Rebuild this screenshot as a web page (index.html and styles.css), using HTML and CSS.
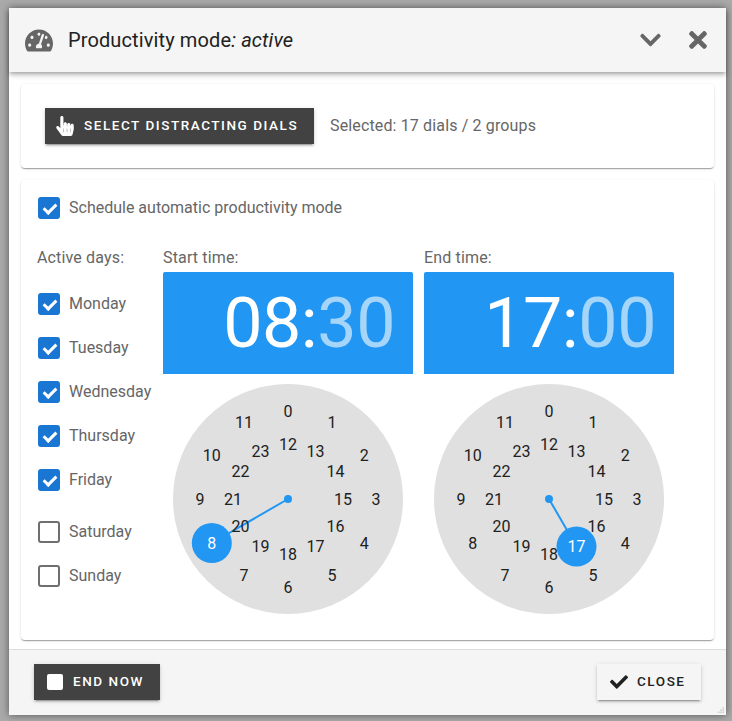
FILE: index.html
```html
<!DOCTYPE html>
<html lang="en">
<head>
  <meta charset="UTF-8">
  <title>Productivity mode</title>
  <link rel="stylesheet" href="styles.css">
</head>
<body>
  <div class="dialog">

    <div class="header">
      <svg class="icon-gauge" viewBox="0 0 576 512"><path d="M288 32C128.94 32 0 160.94 0 320c0 52.8 14.25 102.26 39.06 144.8 5.61 9.62 16.3 15.2 27.44 15.2h443c11.14 0 21.83-5.58 27.44-15.2C561.75 422.26 576 372.8 576 320c0-159.06-128.94-288-288-288zm0 64c14.71 0 26.58 10.13 30.32 23.65-1.11 2.26-2.64 4.23-3.45 6.67l-9.22 27.67c-5.13 3.49-10.97 6.01-17.64 6.01-17.67 0-32-14.33-32-32S270.33 96 288 96zM96 384c-17.67 0-32-14.33-32-32s14.33-32 32-32 32 14.33 32 32-14.33 32-32 32zm48-160c-17.67 0-32-14.33-32-32s14.33-32 32-32 32 14.33 32 32-14.33 32-32 32zm246.77-72.41l-61.33 184C343.13 347.33 352 364.54 352 384c0 11.72-3.38 22.55-8.88 32H232.88c-5.5-9.45-8.88-20.28-8.88-32 0-33.94 26.5-61.43 59.9-63.59l61.34-184.01c4.17-12.56 17.73-19.45 30.36-15.17 12.57 4.19 19.35 17.79 15.17 30.36zm14.66 57.2l15.52-46.55c3.47-1.29 7.13-2.23 11.05-2.23 17.67 0 32 14.33 32 32s-14.33 32-32 32c-11.38-.01-20.89-6.28-26.57-15.22zM480 384c-17.67 0-32-14.33-32-32s14.33-32 32-32 32 14.33 32 32-14.33 32-32 32z"/></svg>
      <div class="title">Productivity mode<em>: active</em></div>
      <svg class="icon-chevron" viewBox="0 0 448 512"><path d="M207.029 381.476L12.686 187.132c-9.373-9.373-9.373-24.569 0-33.941l22.667-22.667c9.357-9.357 24.522-9.375 33.901-.04L224 284.505l154.745-154.021c9.379-9.335 24.544-9.317 33.901.04l22.667 22.667c9.373 9.373 9.373 24.569 0 33.941L240.971 381.476c-9.373 9.372-24.569 9.372-33.942 0z"/></svg>
      <svg class="icon-times" viewBox="0 0 352 512"><path d="M242.72 256l100.07-100.07c12.28-12.28 12.28-32.19 0-44.48l-22.24-22.24c-12.28-12.28-32.19-12.28-44.48 0L176 189.28 75.93 89.21c-12.28-12.28-32.19-12.28-44.48 0L9.21 111.45c-12.28 12.28-12.28 32.19 0 44.48L109.28 256 9.21 356.07c-12.28 12.28-12.28 32.19 0 44.48l22.24 22.24c12.28 12.28 32.2 12.28 44.48 0L176 322.72l100.07 100.07c12.28 12.28 32.2 12.28 44.48 0l22.24-22.24c12.28-12.28 12.28-32.19 0-44.48L242.72 256z"/></svg>
    </div>

    <div class="content">
      <div class="card card-select">
        <button class="btn btn-dark btn-select">
          <svg class="icon-hand" viewBox="0 0 448 512"><path d="M448 240v96c0 3.084-.356 6.159-1.063 9.162l-32 136C410.686 499.23 394.562 512 376 512H168a40.004 40.004 0 0 1-32.35-16.473l-127.997-176c-12.993-17.866-9.043-42.883 8.822-55.876 17.867-12.994 42.884-9.043 55.877 8.823L104 315.992V40c0-22.091 17.908-40 40-40s40 17.909 40 40v200h8v-40c0-22.091 17.908-40 40-40s40 17.909 40 40v40h8v-24c0-22.091 17.908-40 40-40s40 17.909 40 40v24h8c0-22.091 17.908-40 40-40s40 17.909 40 40zm-256 80h-8v96h8v-96zm88 0h-8v96h8v-96zm88 0h-8v96h8v-96z"/></svg>
          Select distracting dials
        </button>
        <span class="selected">Selected: 17 dials / 2 groups</span>
      </div>

      <div class="card card-schedule">
        <div class="check"><span class="box on"></span>Schedule automatic productivity mode</div>

        <div class="schedule">
          <div class="days">
            <div class="label">Active days:</div>
            <div class="day-list">
              <div class="check"><span class="box on"></span>Monday</div>
              <div class="check"><span class="box on"></span>Tuesday</div>
              <div class="check"><span class="box on"></span>Wednesday</div>
              <div class="check"><span class="box on"></span>Thursday</div>
              <div class="check"><span class="box on"></span>Friday</div>
              <div class="check weekend"><span class="box"></span>Saturday</div>
              <div class="check"><span class="box"></span>Sunday</div>
            </div>
          </div>

          <div class="time-col">
            <div class="label">Start time:</div>
            <div class="time">08:<span class="minutes">30</span></div>
            <svg class="clock" viewBox="-115 -115 230 230">
              <circle class="face" r="115"/>
              <line class="hand" x1="0" y1="0" x2="-76.2" y2="44"/>
              <circle class="hand-dot" r="4"/>
              <circle class="hand-dot" cx="-76.2" cy="44" r="20"/>
              <text x="0" y="-88">0</text><text x="44" y="-76.2">1</text><text x="76.2" y="-44">2</text><text x="88" y="0">3</text>
              <text x="76.2" y="44">4</text><text x="44" y="76.2">5</text><text x="0" y="88">6</text><text x="-44" y="76.2">7</text>
              <text class="picked" x="-76.2" y="44">8</text><text x="-88" y="0">9</text><text x="-76.2" y="-44">10</text><text x="-44" y="-76.2">11</text>
              <text x="0" y="-55">12</text><text x="27.5" y="-47.6">13</text><text x="47.6" y="-27.5">14</text><text x="55" y="0">15</text>
              <text x="47.6" y="27.5">16</text><text x="27.5" y="47.6">17</text><text x="0" y="55">18</text><text x="-27.5" y="47.6">19</text>
              <text x="-47.6" y="27.5">20</text><text x="-55" y="0">21</text><text x="-47.6" y="-27.5">22</text><text x="-27.5" y="-47.6">23</text>
            </svg>
          </div>

          <div class="time-col">
            <div class="label">End time:</div>
            <div class="time">17:<span class="minutes">00</span></div>
            <svg class="clock" viewBox="-115 -115 230 230">
              <circle class="face" r="115"/>
              <line class="hand" x1="0" y1="0" x2="27.5" y2="47.6"/>
              <circle class="hand-dot" r="4"/>
              <text x="0" y="-88">0</text><text x="44" y="-76.2">1</text><text x="76.2" y="-44">2</text><text x="88" y="0">3</text>
              <text x="76.2" y="44">4</text><text x="44" y="76.2">5</text><text x="0" y="88">6</text><text x="-44" y="76.2">7</text>
              <text x="-76.2" y="44">8</text><text x="-88" y="0">9</text><text x="-76.2" y="-44">10</text><text x="-44" y="-76.2">11</text>
              <text x="0" y="-55">12</text><text x="27.5" y="-47.6">13</text><text x="47.6" y="-27.5">14</text><text x="55" y="0">15</text>
              <text x="47.6" y="27.5">16</text><text x="0" y="55">18</text><text x="-27.5" y="47.6">19</text>
              <text x="-47.6" y="27.5">20</text><text x="-55" y="0">21</text><text x="-47.6" y="-27.5">22</text><text x="-27.5" y="-47.6">23</text>
              <circle class="hand-dot" cx="27.5" cy="47.6" r="20"/>
              <text class="picked" x="27.5" y="47.6">17</text>
            </svg>
          </div>
        </div>
      </div>
    </div>

    <div class="footer">
      <button class="btn btn-dark btn-end"><span class="stop"></span>End now</button>
      <button class="btn btn-light">
        <svg class="icon-check" viewBox="0 0 512 512"><path d="M173.898 439.404l-166.4-166.4c-9.997-9.997-9.997-26.206 0-36.204l36.203-36.204c9.997-9.998 26.207-9.998 36.204 0L192 312.69 432.095 72.596c9.997-9.997 26.207-9.997 36.204 0l36.203 36.204c9.997 9.997 9.997 26.206 0 36.204l-294.4 294.401c-9.998 9.997-26.207 9.997-36.204-.001z"/></svg>
        Close
      </button>
      <!-- resize handle -->
      <svg class="grip" viewBox="0 0 8 8"><path d="M6 0h2v2H6zM3 3h2v2H3zM6 3h2v2H6zM0 6h2v2H0zM3 6h2v2H3zM6 6h2v2H6z"/></svg>
    </div>

  </div>
</body>
</html>
```

FILE: styles.css
```css
html, body {
  margin: 0;
  padding: 0;
  height: 100%;
  background: #aaaaaa;
  overflow: hidden;
  font-family: Roboto, sans-serif;
}
body {
  padding: 8px 0 0 9px;
  box-sizing: border-box;
}
.dialog {
  width: 717px;
  height: 707px;
  display: flex;
  flex-direction: column;
  background: white;
  box-shadow: 0 0 8px rgba(0, 0, 0, .5);
}

.header {
  height: 64px;
  flex: none;
  display: flex;
  align-items: center;
  padding: 0 19px 0 16px;
  background: #f5f5f5;
  position: relative;
  box-shadow: 0 2px 4px -1px rgba(0, 0, 0, .3), 0 4px 5px 0 rgba(0, 0, 0, .14);
}
.icon-gauge {
  width: 28px;
  height: 25px;
  fill: #666;
}
.title {
  flex: 1;
  margin-left: 15px;
  font-size: 20px;
  letter-spacing: .12px;
  color: #212121;
}
.icon-chevron {
  width: 21px;
  height: 24px;
  fill: #666;
  margin-right: 28px;
}
.icon-times {
  width: 18px;
  height: 26px;
  fill: #666;
}

.content {
  flex: 1;
  padding: 12px 12px 9px;
}
.card {
  background: white;
  border-radius: 4px;
  box-shadow: 0 2px 1px -1px rgba(0, 0, 0, .2), 0 1px 1px 0 rgba(0, 0, 0, .14), 0 1px 3px 0 rgba(0, 0, 0, .12);
}
.card-select {
  height: 84px;
  display: flex;
  align-items: center;
  padding-left: 24px;
}
.selected {
  margin-left: 16px;
  padding-bottom: 2px;
  font-size: 16px;
  letter-spacing: .14px;
  color: #666;
}
.card-schedule {
  margin-top: 12px;
  height: 460px;
  padding: 17px 0 0 17px;
  box-sizing: border-box;
}

.btn {
  height: 36px;
  display: flex;
  align-items: center;
  border: none;
  border-radius: 0;
  padding: 0 0 2px;
  font-family: Roboto, sans-serif;
  font-size: 13.5px;
  font-weight: 500;
  letter-spacing: 1.55px;
  text-transform: uppercase;
  box-shadow: 0 3px 1px -2px rgba(0, 0, 0, .2), 0 2px 2px 0 rgba(0, 0, 0, .14), 0 1px 5px 0 rgba(0, 0, 0, .12);
}
.btn-dark {
  background: #424242;
  color: white;
}
.btn-light {
  background: #f5f5f5;
  color: #212121;
}
.btn-select {
  width: 269px;
  padding-left: 11px;
}
.icon-hand {
  width: 18px;
  height: 20px;
  fill: white;
  margin: 2px 10px 0 0;
}
.btn-end {
  width: 126px;
  padding-left: 13px;
}
.stop {
  width: 16px;
  height: 16px;
  margin-top: 2px;
  border-radius: 2px;
  background: white;
  margin-right: 10px;
}
.btn-light {
  width: 104px;
  padding-left: 13px;
}
.icon-check {
  width: 18px;
  height: 18px;
  fill: #212121;
  margin: 2px 9px 0 0;
}

.check {
  display: flex;
  align-items: flex-start;
  height: 22px;
  line-height: 21px;
  font-size: 16px;
  color: #666;
}
.box {
  width: 22px;
  height: 22px;
  box-sizing: border-box;
  flex: none;
  margin-right: 9px;
  border: 2px solid #6f6f6f;
  border-radius: 3px;
  position: relative;
}
.box.on {
  background: #1976d2;
  border-color: #1976d2;
}
.box.on::after {
  content: "";
  position: absolute;
  left: 6px;
  top: 2px;
  width: 5px;
  height: 10px;
  border: solid white;
  border-width: 0 3px 3px 0;
  transform: rotate(45deg);
}

.schedule {
  display: flex;
  margin-top: 29px;
}
.label {
  height: 18px;
  font-size: 16px;
  line-height: 20px;
  letter-spacing: .15px;
  color: #666;
}
.days {
  width: 126px;
  flex: none;
  margin-left: -1px;
}
.day-list {
  margin: 27px 0 0 1px;
  display: flex;
  flex-direction: column;
  gap: 22px;
}
.weekend {
  margin-top: 8px;
}
.time-col {
  width: 250px;
  margin-right: 11px;
}
.time {
  height: 102px;
  margin-top: 6px;
  padding-right: 18px;
  border-radius: 2px 2px 0 0;
  background: #2196f3;
  color: white;
  font-size: 70px;
  letter-spacing: -.5px;
  line-height: 102px;
  text-align: right;
}
.minutes {
  color: rgba(255, 255, 255, .6);
}
.clock {
  display: block;
  width: 230px;
  height: 230px;
  margin: 10px auto 0;
}
.clock text {
  font-size: 16px;
  fill: #212121;
  text-anchor: middle;
  dominant-baseline: central;
}
.clock .picked {
  fill: white;
}
.face {
  fill: #e0e0e0;
}
.hand {
  stroke: #2196f3;
  stroke-width: 2;
}
.hand-dot {
  fill: #2196f3;
}

.footer {
  height: 64px;
  flex: none;
  display: flex;
  align-items: center;
  justify-content: space-between;
  padding: 0 25px 1px;
  background: #f5f5f5;
  border-top: 1px solid #ddd;
  position: relative;
}
.grip {
  position: absolute;
  right: 2px;
  bottom: 2px;
  width: 6px;
  height: 6px;
  fill: #ccc;
}
```
